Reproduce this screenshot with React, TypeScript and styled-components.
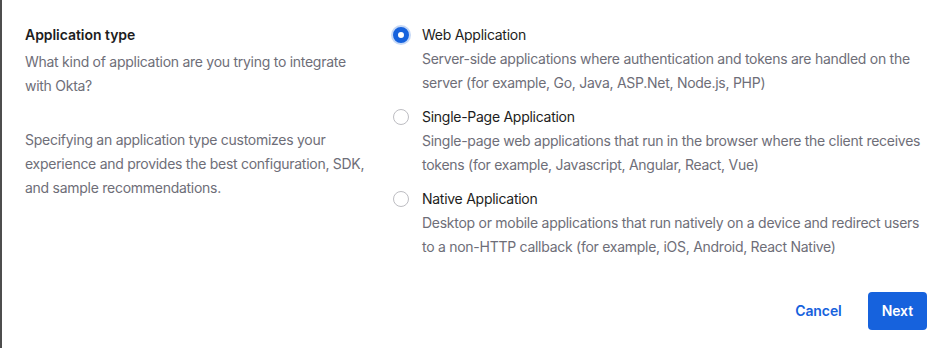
import React, { useState } from "react";
import styled, { createGlobalStyle } from "styled-components";

const GlobalStyle = createGlobalStyle`
  html, body {
    margin: 0;
    padding: 0;
    background: #ffffff;
  }
  body {
    font-family: Inter, "Noto Sans", "Liberation Sans", sans-serif;
    letter-spacing: -0.27px;
    -webkit-font-smoothing: antialiased;
  }
`;

const Page = styled.div`
  box-sizing: border-box;
  width: 942px;
  height: 348px;
  border-left: 2px solid #4d4d4d;
  padding: 23px 15px 0 23px;
  display: flex;
  flex-direction: column;
`;

const Section = styled.div`
  display: grid;
  grid-template-columns: 342px 1fr;
  column-gap: 26px;
`;

const Intro = styled.div`
  display: flex;
  flex-direction: column;
`;

const Heading = styled.h2`
  margin: 0;
  font-size: 14px;
  line-height: 24px;
  font-weight: 600;
  letter-spacing: -0.05px;
  color: #1d1d21;
`;

const Hint = styled.p<{ $spaced?: boolean }>`
  margin: ${(p) => (p.$spaced ? "30px" : "3px")} 0 0;
  font-size: 14px;
  line-height: 24px;
  color: #6e6e78;
`;

const Options = styled.div`
  display: flex;
  flex-direction: column;
  gap: 10px;
`;

const Option = styled.label`
  display: grid;
  grid-template-columns: 16px 1fr;
  column-gap: 13px;
  cursor: pointer;
`;

const Dot = styled.span<{ $checked: boolean }>`
  box-sizing: border-box;
  width: 16px;
  height: 16px;
  margin-top: 4px;
  border-radius: 50%;
  border: ${(p) => (p.$checked ? "5px solid #1662dd" : "1.5px solid #bdbdc2")};
  background: #ffffff;
  box-shadow: ${(p) => (p.$checked ? "0 0 0 2px rgba(22, 98, 221, 0.25)" : "none")};
`;

const OptionText = styled.div`
  display: flex;
  flex-direction: column;
`;

const OptionLabel = styled.span`
  font-size: 14px;
  line-height: 24px;
  color: #1d1d21;
`;

const OptionDesc = styled.span`
  font-size: 14px;
  line-height: 24px;
  color: #6e6e78;
`;

const Actions = styled.div`
  display: flex;
  justify-content: flex-end;
  align-items: center;
  gap: 12px;
  margin-top: 33px;
`;

const Button = styled.button<{ $primary?: boolean }>`
  font-family: inherit;
  letter-spacing: -0.1px;
  font-size: 14px;
  font-weight: 600;
  line-height: 20px;
  height: 38px;
  padding: 0 14px;
  border-radius: 4px;
  border: none;
  cursor: pointer;
  color: ${(p) => (p.$primary ? "#ffffff" : "#1662dd")};
  background: ${(p) => (p.$primary ? "#1662dd" : "transparent")};
`;

const types = [
  {
    id: "web",
    label: "Web Application",
    desc: "Server-side applications where authentication and tokens are handled on the server (for example, Go, Java, ASP.Net, Node.js, PHP)",
  },
  {
    id: "spa",
    label: "Single-Page Application",
    desc: "Single-page web applications that run in the browser where the client receives tokens (for example, Javascript, Angular, React, Vue)",
  },
  {
    id: "native",
    label: "Native Application",
    desc: "Desktop or mobile applications that run natively on a device and redirect users to a non-HTTP callback (for example, iOS, Android, React Native)",
  },
];

const App: React.FC = () => {
  const [selected, setSelected] = useState("web");

  return (
    <>
      <GlobalStyle />
      <Page>
        <Section>
          <Intro>
            <Heading>Application type</Heading>
            <Hint>What kind of application are you trying to integrate with Okta?</Hint>
            <Hint $spaced>
              Specifying an application type customizes your experience and provides the best configuration, SDK, and sample recommendations.
            </Hint>
          </Intro>
          <Options>
            {types.map((t) => (
              <Option key={t.id} onClick={() => setSelected(t.id)}>
                <Dot $checked={selected === t.id} />
                <OptionText>
                  <OptionLabel>{t.label}</OptionLabel>
                  <OptionDesc>{t.desc}</OptionDesc>
                </OptionText>
              </Option>
            ))}
          </Options>
        </Section>
        <Actions>
          <Button>Cancel</Button>
          <Button $primary>Next</Button>
        </Actions>
      </Page>
    </>
  );
};

export default App;
